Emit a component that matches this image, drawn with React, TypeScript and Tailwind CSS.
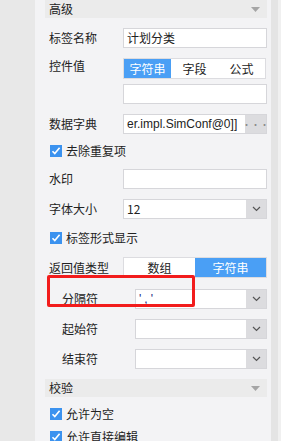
import React from "react";

const font = { fontFamily: '"Noto Sans CJK SC", "Liberation Sans", sans-serif' };

const Chevron = () => (
  <svg className="w-[9px] h-[6px]" viewBox="0 0 9 6" fill="none" stroke="#555" strokeWidth={1.2}>
    <path d="M1 1l3.5 3.5L8 1" />
  </svg>
);

const Triangle = () => (
  <svg className="w-[9px] h-[5px]" viewBox="0 0 9 5" fill="#a5a5a5">
    <path d="M0 0h9L4.5 5z" />
  </svg>
);

const Check = () => (
  <span className="w-[12px] h-[12px] bg-[#3b92ef] flex items-center justify-center shrink-0">
    <svg className="w-[10px] h-[10px]" viewBox="0 0 10 10" fill="none" stroke="#fff" strokeWidth={1.6}>
      <path d="M1.5 5.2l2.3 2.4L8.6 1.8" />
    </svg>
  </span>
);

const Header = ({ title, className = "" }: { title: string; className?: string }) => (
  <div className={`bg-[#ebebeb] flex items-center justify-between pl-[4px] pr-[7px] ${className}`}>
    <span className="text-[12px] text-[#222]">{title}</span>
    <Triangle />
  </div>
);

const Input = ({ value = "", className = "" }: { value?: string; className?: string }) => (
  <div className={`h-[20px] bg-white border border-[#d6d6da] flex items-center px-[3px] text-[12px] text-[#222] ${className}`}>
    {value}
  </div>
);

const Select = ({ value = "", className = "" }: { value?: React.ReactNode; className?: string }) => (
  <div className={`h-[20px] bg-white border border-[#d6d6da] flex ${className}`}>
    <div className="flex-1 flex items-center px-[3px] text-[12px] text-[#222]">{value}</div>
    <div className="w-[20px] bg-[#dcdcdf] flex items-center justify-center">
      <Chevron />
    </div>
  </div>
);

const Row = ({ label, children, className = "", indent = false }: { label: string; children: React.ReactNode; className?: string; indent?: boolean }) => (
  <div className={`flex items-center ${className}`}>
    <span className={`text-[12px] text-[#222] shrink-0 ${indent ? "w-[90px] pl-[17px]" : "w-[78px] pl-[4px]"}`}>{label}</span>
    <div className="flex-1">{children}</div>
  </div>
);

const CheckRow = ({ label, className = "" }: { label: string; className?: string }) => (
  <div className={`flex items-center gap-[4px] pl-[5px] h-[18px] ${className}`}>
    <Check />
    <span className="text-[12px] text-[#222]">{label}</span>
  </div>
);

export default function App() {
  return (
    <div className="relative w-[281px] h-[441px] overflow-hidden bg-[#e8e8e8] flex" style={font}>
      <div className="ml-[35px] w-[236px] bg-[#f3f3f5] pl-[10px] pr-[4px] flex flex-col">
        <Header title="高级" className="h-[18px]" />

        <Row label="标签名称" className="mt-[10px]">
          <Input value="计划分类" />
        </Row>

        <div className="flex mt-[10px]">
          <span className="w-[78px] pl-[4px] text-[12px] text-[#222] leading-[15px]">控件值</span>
          <div className="flex-1 flex flex-col gap-[5px]">
            <div className="h-[21px] border border-[#dcdce0] bg-white flex text-[12px] mr-[1px]">
              <div className="w-[47px] bg-[#4a9ff5] text-white flex items-center justify-center">字符串</div>
              <div className="w-[47px] flex items-center justify-center text-[#222]">字段</div>
              <div className="w-[47px] flex items-center justify-center text-[#222]">公式</div>
            </div>
            <Input />
          </div>
        </div>

        <Row label="数据字典" className="mt-[10px]">
          <div className="h-[20px] flex border border-[#d6d6da] bg-white">
            <div className="flex-1 flex items-center px-[3px] text-[12px] text-[#222] overflow-hidden whitespace-nowrap" style={{ fontFamily: '"Liberation Sans", sans-serif' }}>
              er.impl.SimConf@0]]
            </div>
            <div className="w-[21px] shrink-0 bg-[#dcdcdf] flex items-center justify-center text-[#888] text-[9px] leading-none">···</div>
          </div>
        </Row>

        <CheckRow label="去除重复项" className="mt-[8px]" />

        <Row label="水印" className="mt-[9px]">
          <Input />
        </Row>

        <Row label="字体大小" className="mt-[10px]">
          <Select value="12" />
        </Row>

        <CheckRow label="标签形式显示" className="mt-[10px]" />

        <Row label="返回值类型" className="mt-[10px]">
          <div className="h-[21px] border border-[#dcdce0] bg-white flex text-[12px]">
            <div className="flex-1 flex items-center justify-center text-[#222]">数组</div>
            <div className="flex-1 bg-[#4a9ff5] text-white flex items-center justify-center">字符串</div>
          </div>
        </Row>

        <Row label="分隔符" indent className="mt-[11px]">
          <Select value={<span className="text-[#1a237e] tracking-[3px]" style={{ fontFamily: '"Liberation Sans", sans-serif' }}>','</span>} />
        </Row>

        <Row label="起始符" indent className="mt-[10px]">
          <Select />
        </Row>

        <Row label="结束符" indent className="mt-[10px]">
          <Select />
        </Row>

        <Header title="校验" className="h-[20px] mt-[10px]" />

        <CheckRow label="允许为空" className="mt-[8px]" />
        <CheckRow label="允许直接编辑" className="mt-[5px]" />
      </div>
      <div className="w-[7px] bg-[#e4e4e4]" />
      <div className="flex-1 bg-[#f0f0f0]" />

      <div className="absolute left-[47px] top-[275px] w-[148px] h-[32px] border-[3px] border-[#f21c1c] rounded-[2px]" />
    </div>
  );
}
